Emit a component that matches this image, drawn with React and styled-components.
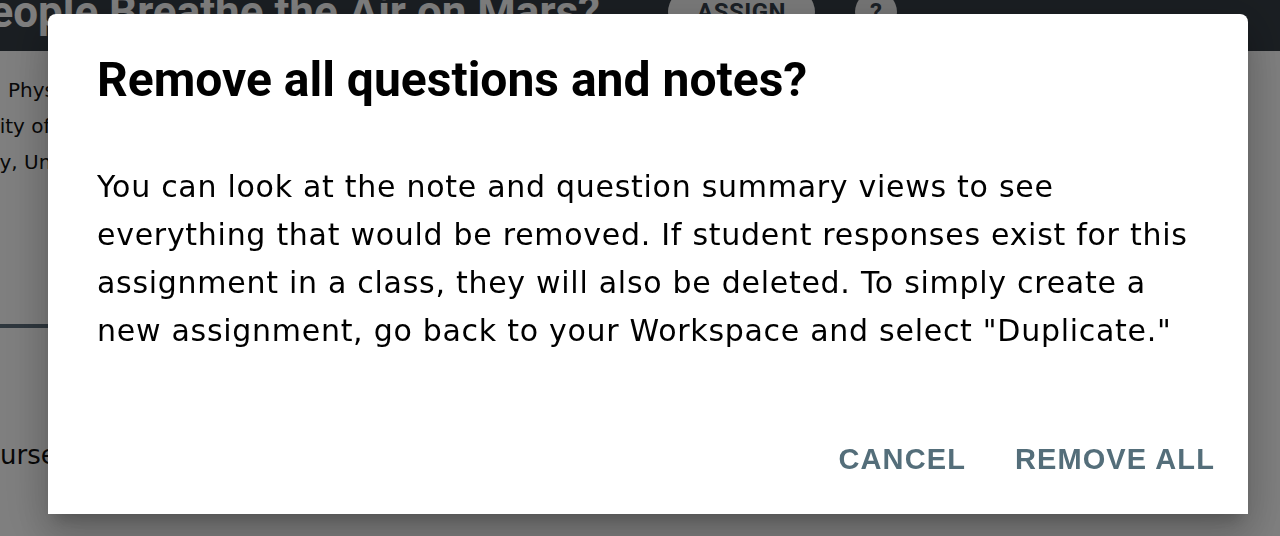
import React from 'react';
import styled, { createGlobalStyle } from 'styled-components';

const GlobalStyle = createGlobalStyle`
  html, body {
    margin: 0;
    padding: 0;
    height: 100%;
    overflow: hidden;
    background: #ffffff;
  }
  body {
    font-family: "DejaVu Sans", "Noto Sans", sans-serif;
  }
`;

// page behind the dialog, scrolled a little
const Page = styled.div`
  margin-top: -14px;
  width: 1280px;
`;

const Header = styled.header`
  height: 65px;
  background: #353d45;
  display: flex;
  align-items: flex-start;
`;

const HeaderRow = styled.div`
  height: 52px;
  display: flex;
  align-items: center;
`;

// right-aligned; overflows to the left, off the screen
const PageTitle = styled.h1`
  margin: 0;
  width: 600px;
  display: flex;
  justify-content: flex-end;
  white-space: nowrap;
  font-family: "Roboto", "Liberation Sans", sans-serif;
  font-weight: 700;
  font-size: 44px;
  line-height: 44px;
  color: #ffffff;
`;

const AssignButton = styled.button`
  margin-left: 68px;
  width: 147px;
  height: 46px;
  border: none;
  border-radius: 23px;
  background: #f4f4f4;
  color: #37414b;
  font-family: "Roboto", "Liberation Sans", sans-serif;
  font-weight: 700;
  font-size: 24px;
  letter-spacing: 0.5px;
`;

const HelpButton = styled.button`
  margin-left: 40px;
  width: 42px;
  height: 42px;
  border: none;
  border-radius: 50%;
  background: #ececec;
  color: #37414b;
  font-family: "Roboto", "Liberation Sans", sans-serif;
  font-weight: 700;
  font-size: 24px;
`;

const Main = styled.main`
  display: flex;
`;

const LeftPane = styled.section`
  width: 731px;
  border-right: 4px solid #3a4a52;
`;

const Info = styled.div`
  height: 277px;
  padding-top: 21px;
  border-bottom: 4px solid #5d6e7c;
  box-sizing: border-box;
`;

const InfoLine = styled.div`
  margin-left: ${(p) => p.indent}px;
  font-family: "DejaVu Sans", "Noto Sans", sans-serif;
  font-size: 20px;
  line-height: 36px;
  color: #111;
  white-space: nowrap;
`;

const SectionHeading = styled.h2`
  margin: 112px 0 0 ${(p) => p.indent}px;
  font-family: "DejaVu Sans", "Noto Sans", sans-serif;
  font-weight: 400;
  font-size: 26px;
  color: #111;
`;

// modal
const Backdrop = styled.div`
  position: fixed;
  inset: 0;
  background: rgba(0, 0, 0, 0.5);
  display: flex;
  align-items: flex-start;
  padding: 14px 0 0 48px;
`;

const Dialog = styled.div`
  width: 1200px;
  height: 500px;
  background: #ffffff;
  border-radius: 8px 8px 0 0;
  box-shadow: 0px 11px 15px -7px rgba(0, 0, 0, 0.2),
    0px 24px 38px 3px rgba(0, 0, 0, 0.14),
    0px 9px 46px 8px rgba(0, 0, 0, 0.12);
  display: flex;
  flex-direction: column;
  box-sizing: border-box;
  padding: 0 33px 0 49px;
`;

const DialogTitle = styled.h2`
  margin: 38px 0 0;
  font-family: "Roboto", "Liberation Sans", sans-serif;
  font-weight: 700;
  font-size: 48px;
  line-height: 56px;
  color: #000;
`;

const DialogText = styled.p`
  margin: 55px 0 0;
  font-family: "DejaVu Sans", "Noto Sans", sans-serif;
  font-size: 30px;
  letter-spacing: 0.72px;
  line-height: 48px;
  color: #000;
`;

const Actions = styled.div`
  margin-top: auto;
  margin-bottom: 38px;
  display: flex;
  justify-content: flex-end;
  gap: 49px;
`;

const ActionButton = styled.button`
  padding: 0;
  border: none;
  background: none;
  font-family: "Liberation Sans", Arial, sans-serif;
  font-weight: 700;
  font-size: 29px;
  letter-spacing: 1.1px;
  color: #546e7a;
  text-transform: uppercase;
  cursor: pointer;
`;

const App = () => {
  return (
    <>
      <GlobalStyle />
      <Page>
        <Header>
          <HeaderRow>
            <PageTitle>
              <span>Can People Breathe the Air on Mars?</span>
            </PageTitle>
            <AssignButton>ASSIGN</AssignButton>
            <HelpButton>?</HelpButton>
          </HeaderRow>
        </Header>
        <Main>
          <LeftPane>
            <Info>
              <InfoLine indent={8}>Physics and Astronomy</InfoLine>
              <InfoLine indent={-76}>University of Arizona</InfoLine>
              <InfoLine indent={-71}>Geology, University of Utah</InfoLine>
            </Info>
            <SectionHeading indent={-34}>Courses</SectionHeading>
          </LeftPane>
        </Main>
      </Page>
      <Backdrop>
        <Dialog>
          <DialogTitle>Remove all questions and notes?</DialogTitle>
          <DialogText>
            You can look at the note and question summary views to see<br />
            everything that would be removed. If student responses exist for this<br />
            assignment in a class, they will also be deleted. To simply create a<br />
            new assignment, go back to your Workspace and select "Duplicate."
          </DialogText>
          <Actions>
            <ActionButton>Cancel</ActionButton>
            <ActionButton>Remove all</ActionButton>
          </Actions>
        </Dialog>
      </Backdrop>
    </>
  );
};

export default App;
